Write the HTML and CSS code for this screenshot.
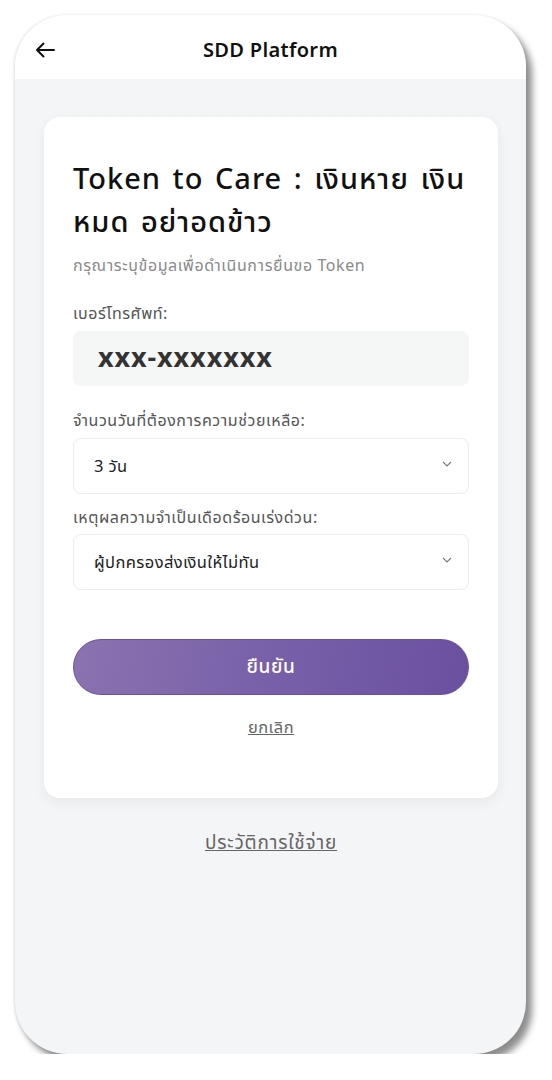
FILE: index.html
```html
<!DOCTYPE html>
<html lang="th">
<head>
<meta charset="utf-8">
<title>SDD Platform</title>
<link rel="stylesheet" href="styles.css">
</head>
<body>
<div class="phone">
  <header class="topbar">
    <button class="back" aria-label="back">
      <svg width="20" height="16" viewBox="0 0 20 16"><path d="M19 8H2M8.5 1.5L2 8l6.5 6.5" fill="none" stroke="#111" stroke-width="2" stroke-linecap="round" stroke-linejoin="round"/></svg>
    </button>
    <h1 class="topbar-title">SDD Platform</h1>
    <span></span>
  </header>
  <main class="content">
    <section class="card">
      <h2 class="card-title">Token to Care : เงินหาย เงินหมด อย่าอดข้าว</h2>
      <p class="card-sub">กรุณาระบุข้อมูลเพื่อดำเนินการยื่นขอ Token</p>

      <label class="field-label lbl-phone">เบอร์โทรศัพท์:</label>
      <div class="phone-box">xxx-xxxxxxx</div>

      <label class="field-label lbl-days">จำนวนวันที่ต้องการความช่วยเหลือ:</label>
      <div class="select">
        <span>3 วัน</span>
        <svg class="chev" width="10" height="6" viewBox="0 0 10 6"><path d="M1 1l4 4 4-4" fill="none" stroke="#777" stroke-width="1.1"/></svg>
      </div>

      <label class="field-label lbl-reason">เหตุผลความจำเป็นเดือดร้อนเร่งด่วน:</label>
      <div class="select select-reason">
        <span>ผู้ปกครองส่งเงินให้ไม่ทัน</span>
        <svg class="chev" width="10" height="6" viewBox="0 0 10 6"><path d="M1 1l4 4 4-4" fill="none" stroke="#777" stroke-width="1.1"/></svg>
      </div>

      <button class="confirm">ยืนยัน</button>
      <a class="cancel" href="#">ยกเลิก</a>
    </section>
    <a class="history" href="#">ประวัติการใช้จ่าย</a>
  </main>
</div>
</body>
</html>
```

FILE: styles.css
```css
* { box-sizing: border-box; }

body {
  margin: 0;
  background: #ffffff;
  font-family: "Noto Sans Thai", "Noto Sans", "DejaVu Sans", sans-serif;
  color: #222;
}

.phone {
  margin: 15px 0 0 15px;
  width: 511px;
  height: 1039px;
  border-radius: 52px;
  background: #f4f5f7;
  overflow: hidden;
  box-shadow: 6px 7px 7px rgba(0, 0, 0, 0.45), -1px 0 3px rgba(0, 0, 0, 0.12);
  display: flex;
  flex-direction: column;
}

.topbar {
  height: 64px;
  background: #ffffff;
  display: grid;
  grid-template-columns: 1fr auto 1fr;
  align-items: center;
  padding: 0 20px;
}

.back {
  justify-self: start;
  background: none;
  border: 0;
  padding: 5px 0 0;
  display: flex;
  align-items: center;
}

.topbar-title {
  margin: 0;
  font-size: 20px;
  font-weight: 600;
  letter-spacing: 0.3px;
  color: #111;
  padding-top: 7px;
}

.content {
  padding: 38px 28px 0 29px;
  display: flex;
  flex-direction: column;
  align-items: center;
}

.card {
  width: 100%;
  background: #ffffff;
  border-radius: 16px;
  box-shadow: 0 4px 14px rgba(0, 0, 0, 0.06);
  padding: 42px 29px 58px;
  display: flex;
  flex-direction: column;
}

.card-title {
  margin: 0;
  font-size: 29px;
  line-height: 43px;
  font-weight: 500;
  letter-spacing: 1px;
  word-spacing: 3px;
  color: #111;
}

.card-sub {
  margin: 9px 0 0;
  font-size: 16px;
  line-height: 24px;
  letter-spacing: 0.6px;
  color: #8a8a8a;
}

.field-label {
  display: block;
  font-size: 16px;
  line-height: 24px;
  letter-spacing: 0.55px;
  color: #555;
}

.lbl-phone { margin-top: 24px; }
.lbl-days { margin-top: 23px; }
.lbl-reason { margin-top: 12px; }

.phone-box {
  margin-top: 5px;
  height: 55px;
  border-radius: 8px;
  background: #f5f6f6;
  display: flex;
  align-items: center;
  padding-left: 25px;
  font-size: 27px;
  font-weight: 700;
  color: #333;
  letter-spacing: 0.9px;
}

.select {
  margin-top: 5px;
  height: 56px;
  border: 1px solid #ececec;
  border-radius: 8px;
  display: flex;
  align-items: center;
  justify-content: space-between;
  padding: 0 16px 0 20px;
  font-size: 16.5px;
  letter-spacing: 0.4px;
  color: #222;
}

.select-reason { margin-top: 4px; }

.chev { margin-top: -4px; }

.confirm {
  margin-top: 49px;
  height: 56px;
  border-radius: 28px;
  border: 1px solid #6a50a0;
  background: linear-gradient(100deg, #8b72b0 0%, #7a62aa 45%, #6a50a0 100%);
  color: #ffffff;
  font-family: inherit;
  font-size: 19px;
  font-weight: 500;
  letter-spacing: 0.6px;
}

.cancel {
  margin-top: 21px;
  align-self: center;
  font-size: 16.5px;
  line-height: 24px;
  letter-spacing: 0.5px;
  color: #666;
  text-decoration: underline;
}

.history {
  margin-top: 34px;
  font-size: 19px;
  line-height: 24px;
  letter-spacing: 0.8px;
  color: #666;
  text-decoration: underline;
}
```
